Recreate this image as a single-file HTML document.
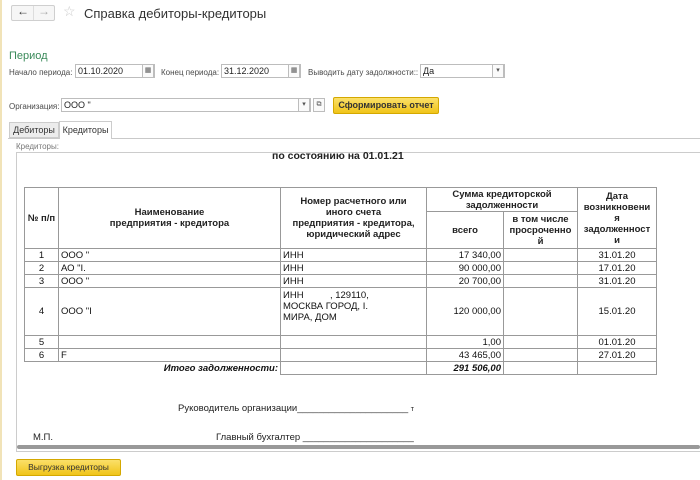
<!DOCTYPE html>
<html><head><meta charset="utf-8"><style>
*{margin:0;padding:0;box-sizing:border-box}
body{width:700px;height:480px;background:#fff;font-family:"Liberation Sans",sans-serif;position:relative;overflow:hidden;color:#333}
.a{position:absolute}
.s{font-size:8px;color:#4a4a4a;white-space:nowrap}
.inp{position:absolute;border:1px solid #bdbdbd;background:#fff;height:14px;font-size:9px;padding:1px 2px;color:#222}
.ib{position:absolute;border:1px solid #bdbdbd;background:#fafafa;height:14px;width:12px;font-size:7px;text-align:center;line-height:12px;color:#555}
table{position:absolute;left:24px;top:187px;border-collapse:collapse;font-size:9.5px;color:#111}
td{border:1px solid #999;padding:0 2px;line-height:11px}
.c{text-align:center}.r{text-align:right}
.h td{text-align:center;font-weight:bold;color:#222}
</style></head><body>
<div class="a" style="left:0;top:0;width:2px;height:480px;background:#f1e3b8"></div>
<div class="a" style="left:11px;top:5px;width:44px;height:16px;border:1px solid #cfcfcf;border-radius:2px;background:#f6f6f6"></div>
<div class="a" style="left:33px;top:6px;width:1px;height:14px;background:#ddd"></div>
<div class="a" style="left:17px;top:4px;font-size:12px;color:#333">&#8592;</div>
<div class="a" style="left:38px;top:4px;font-size:12px;color:#aaa">&#8594;</div>
<div class="a" style="left:63px;top:3px;font-size:14px;color:#ccc">&#9734;</div>
<div class="a" style="left:84px;top:6px;font-size:13px;color:#333">Справка дебиторы-кредиторы</div>
<div class="a" style="left:9px;top:50px;font-size:11px;color:#3a8a5a">Период</div>
<div class="a s" style="left:9px;top:68px">Начало периода:</div>
<div class="inp" style="left:75px;top:64px;width:80px">01.10.2020</div>
<div class="ib" style="left:142px;top:64px">▦</div>
<div class="a s" style="left:161px;top:68px">Конец периода:</div>
<div class="inp" style="left:221px;top:64px;width:80px">31.12.2020</div>
<div class="ib" style="left:288px;top:64px">▦</div>
<div class="a s" style="left:308px;top:68px">Выводить дату задолжности::</div>
<div class="inp" style="left:420px;top:64px;width:85px">Да</div>
<div class="ib" style="left:492px;top:64px">▾</div>
<div class="a s" style="left:9px;top:102px">Организация:</div>
<div class="inp" style="left:61px;top:98px;width:250px">ООО "</div>
<div class="ib" style="left:298px;top:98px">▾</div>
<div class="ib" style="left:313px;top:98px">⧉</div>
<div class="a" style="left:333px;top:97px;width:106px;height:17px;background:linear-gradient(#fbe06a,#f0c419);border:1px solid #d4a800;border-radius:2px;font-size:9px;font-weight:bold;text-align:center;line-height:15px;color:#333">Сформировать отчет</div>
<div class="a" style="left:8px;top:138px;width:692px;height:1px;background:#c9c9c9"></div>
<div class="a" style="left:9px;top:122px;width:50px;height:16px;background:#ececec;border:1px solid #ccc;font-size:9px;text-align:center;line-height:14px">Дебиторы</div>
<div class="a" style="left:59px;top:121px;width:53px;height:18px;background:#fff;border:1px solid #ccc;border-bottom:none;font-size:9px;text-align:center;line-height:16px">Кредиторы</div>
<div class="a s" style="left:16px;top:142px;color:#777;font-size:8px">Кредиторы:</div>
<div class="a" style="left:16px;top:152px;width:690px;height:300px;border:1px solid #ccc"></div>
<div class="a" style="left:17px;top:445px;width:683px;height:4px;background:#999;border-radius:2px"></div>
<div class="a" style="left:272px;top:150px;font-size:10.5px;font-weight:bold;color:#222">по состоянию на 01.01.21</div>
<table>
<colgroup><col style="width:34px"><col style="width:222px"><col style="width:146px"><col style="width:77px"><col style="width:74px"><col style="width:79px"></colgroup>
<tr class="h" style="height:24px"><td rowspan="2">№ п/п</td><td rowspan="2">Наименование<br>предприятия - кредитора</td><td rowspan="2">Номер расчетного или<br>иного счета<br>предприятия - кредитора,<br>юридический адрес</td><td colspan="2">Сумма кредиторской<br>задолженности</td><td rowspan="2">Дата<br>возникновени<br>я<br>задолженност<br>и</td></tr>
<tr class="h" style="height:37px"><td>всего</td><td>в том числе<br>просроченно<br>й</td></tr>
<tr style="height:13px"><td class="c">1</td><td>ООО "</td><td>ИНН</td><td class="r">17 340,00</td><td></td><td class="c">31.01.20</td></tr>
<tr style="height:13px"><td class="c">2</td><td>АО "I.</td><td>ИНН</td><td class="r">90 000,00</td><td></td><td class="c">17.01.20</td></tr>
<tr style="height:13px"><td class="c">3</td><td>ООО "</td><td>ИНН</td><td class="r">20 700,00</td><td></td><td class="c">31.01.20</td></tr>
<tr style="height:48px"><td class="c">4</td><td>ООО "I</td><td>ИНН &nbsp;&nbsp;&nbsp;&nbsp;&nbsp;&nbsp;&nbsp;&nbsp;&nbsp;, 129110,<br>МОСКВА ГОРОД, I.<br>МИРА, ДОМ<br>&nbsp;</td><td class="r">120 000,00</td><td></td><td class="c">15.01.20</td></tr>
<tr style="height:13px"><td class="c">5</td><td></td><td></td><td class="r">1,00</td><td></td><td class="c">01.01.20</td></tr>
<tr style="height:13px"><td class="c">6</td><td>F</td><td></td><td class="r">43 465,00</td><td></td><td class="c">27.01.20</td></tr>
<tr style="height:13px"><td colspan="2" style="border:none;text-align:right;font-weight:bold;font-style:italic">Итого задолженности:</td><td></td><td class="r" style="font-weight:bold;font-style:italic">291 506,00</td><td></td><td></td></tr>
</table>
<div class="a" style="left:178px;top:403px;font-size:9.5px;color:#222">Руководитель организации_____________________ <span style="font-size:7px">т</span></div>
<div class="a" style="left:33px;top:432px;font-size:9.5px;color:#222">М.П.</div>
<div class="a" style="left:216px;top:432px;font-size:9.5px;color:#222">Главный бухгалтер _____________________</div>
<div class="a" style="left:16px;top:459px;width:105px;height:17px;background:linear-gradient(#fbe06a,#f0c419);border:1px solid #d4a800;border-radius:2px;font-size:8.5px;text-align:center;line-height:15px;color:#333">Выгрузка кредиторы</div>
</body></html>
